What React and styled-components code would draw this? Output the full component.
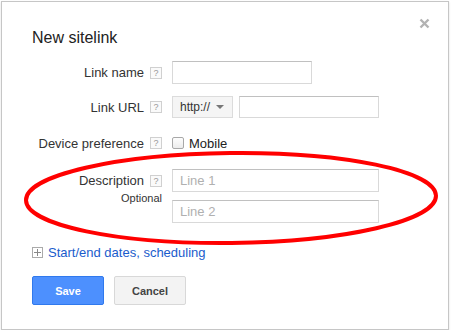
import React from 'react'
import styled, { createGlobalStyle } from 'styled-components'

const Global = createGlobalStyle`
  html, body { margin: 0; padding: 0; background: #fff; }
  body { font-family: "Liberation Sans", Arial, sans-serif; }
`

const Dialog = styled.div`
  position: relative;
  box-sizing: border-box;
  width: 448px;
  height: 329px;
  margin: 1px 0 0 1px;
  padding: 0 30px 0 30px;
  background: #fff;
  border: 1px solid #c6c6c6;
  box-shadow: 0 1px 2px rgba(0, 0, 0, 0.12);
  color: #222;
`

const Header = styled.div`
  display: flex;
  justify-content: space-between;
  align-items: flex-start;
  margin-right: -12px;
`

const Title = styled.h1`
  margin: 27px 0 0 0;
  font-size: 16px;
  line-height: 18px;
  font-weight: normal;
  color: #222;
`

const Close = styled.button`
  margin-top: 16px;
  padding: 0;
  border: 0;
  background: none;
  width: 11px;
  height: 11px;
  display: flex;
`

const Row = styled.div`
  display: flex;
  align-items: flex-start;
  margin-top: ${p => p.$mt}px;
`

const LabelCell = styled.div`
  width: 130px;
  height: ${p => p.$h}px;
  margin-right: ${p => (p.$inStack ? 0 : 10)}px;
  display: flex;
  justify-content: flex-end;
  align-items: center;
  gap: 6px;
  flex-shrink: 0;
`

const LabelStack = styled.div`
  width: 130px;
  margin-right: 10px;
  display: flex;
  flex-direction: column;
  align-items: flex-end;
  flex-shrink: 0;
`

const Label = styled.span`
  font-size: 13px;
  line-height: 15px;
  color: #333;
`

const Sub = styled.span`
  font-size: 11px;
  line-height: 13px;
  color: #333;
`

const Help = styled.span`
  box-sizing: border-box;
  width: 12px;
  height: 12px;
  border: 1px solid #d0d0d0;
  background: #fafafa;
  color: #999;
  font-size: 9px;
  line-height: 10px;
  text-align: center;
`

const Input = styled.input`
  box-sizing: border-box;
  width: ${p => p.$w}px;
  height: ${p => p.$h || 23}px;
  border: 1px solid #d9d9d9;
  border-top-color: #c0c0c0;
  padding: 0 7px;
  font-family: inherit;
  font-size: 13px;
  color: #222;
  outline: none;
  &::placeholder { color: #b0b0b0; }
`

const Fields = styled.div`
  display: flex;
  flex-direction: ${p => (p.$col ? 'column' : 'row')};
  gap: ${p => p.$gap}px;
  align-items: center;
`

const Select = styled.div`
  box-sizing: border-box;
  width: 61px;
  height: 22px;
  padding: 0 7px;
  display: flex;
  align-items: center;
  justify-content: space-between;
  background: #f5f5f5;
  border: 1px solid #dcdcdc;
  font-size: 12px;
  color: #333;
`

const Caret = styled.span`
  width: 0;
  height: 0;
  border-left: 4px solid transparent;
  border-right: 4px solid transparent;
  border-top: 4px solid #777;
  margin-right: 1px;
`

const Check = styled.span`
  box-sizing: border-box;
  width: 12px;
  height: 12px;
  border: 1px solid #a8a8a8;
  border-radius: 2px;
  background: linear-gradient(#fdfdfd, #ececec);
`

const CheckLabel = styled.label`
  display: flex;
  align-items: center;
  gap: 5px;
  height: 20px;
  font-size: 13px;
  color: #222;
`

const Expand = styled.a`
  display: flex;
  align-items: center;
  gap: 5px;
  height: 16px;
  font-size: 13px;
  color: #1a5ccc;
  text-decoration: none;
`

const PlusBox = styled.span`
  position: relative;
  box-sizing: border-box;
  width: 11px;
  height: 11px;
  border: 1px solid #aaa;
  display: flex;
  align-items: center;
  justify-content: center;
  &::before, &::after {
    content: '';
    position: absolute;
    background: #888;
  }
  &::before { width: 7px; height: 1px; }
  &::after { width: 1px; height: 7px; }
`

const Buttons = styled.div`
  display: flex;
  gap: 10px;
  margin-top: 16px;
`

const Button = styled.button`
  box-sizing: border-box;
  width: 72px;
  height: 29px;
  border-radius: 2px;
  font-family: inherit;
  font-size: 11px;
  font-weight: bold;
  border: 1px solid ${p => (p.$primary ? '#3079ed' : '#d8d8d8')};
  background: ${p => (p.$primary ? '#4d90fe' : '#f3f3f3')};
  color: ${p => (p.$primary ? '#fff' : '#444')};
`

const Ring = styled.svg`
  position: absolute;
  left: 0;
  top: 0;
  pointer-events: none;
`

export default function App() {
  return (
    <>
      <Global />
      <Dialog>
        <Header>
          <Title>New sitelink</Title>
          <Close aria-label="Close">
            <svg width="11" height="11" viewBox="0 0 11 11">
              <path d="M1.5 1.5 L9.5 9.5 M9.5 1.5 L1.5 9.5" stroke="#b3b3b3" strokeWidth="2.4" />
            </svg>
          </Close>
        </Header>

        <Row $mt={14}>
          <LabelCell $h={23}>
            <Label>Link name</Label>
            <Help>?</Help>
          </LabelCell>
          <Input $w={140} />
        </Row>

        <Row $mt={12}>
          <LabelCell $h={22}>
            <Label>Link URL</Label>
            <Help>?</Help>
          </LabelCell>
          <Fields $gap={6}>
            <Select>
              http://
              <Caret />
            </Select>
            <Input $w={140} $h={22} />
          </Fields>
        </Row>

        <Row $mt={15}>
          <LabelCell $h={20}>
            <Label>Device preference</Label>
            <Help>?</Help>
          </LabelCell>
          <CheckLabel>
            <Check />
            Mobile
          </CheckLabel>
        </Row>

        <Row $mt={16}>
          <LabelStack>
            <LabelCell $h={23} $inStack>
              <Label>Description</Label>
              <Help>?</Help>
            </LabelCell>
            <Sub>Optional</Sub>
          </LabelStack>
          <Fields $col $gap={8}>
            <Input $w={207} placeholder="Line 1" />
            <Input $w={207} placeholder="Line 2" />
          </Fields>
        </Row>

        <Row $mt={21}>
          <Expand href="#">
            <PlusBox />
            Start/end dates, scheduling
          </Expand>
        </Row>

        <Buttons>
          <Button $primary>Save</Button>
          <Button>Cancel</Button>
        </Buttons>

        <Ring width="448" height="329" viewBox="0 0 448 329">
          <ellipse
            cx="229"
            cy="196"
            rx="205"
            ry="45"
            fill="none"
            stroke="#ff0000"
            strokeWidth="4"
            transform="rotate(-0.6 229 196)"
          />
        </Ring>
      </Dialog>
    </>
  )
}
